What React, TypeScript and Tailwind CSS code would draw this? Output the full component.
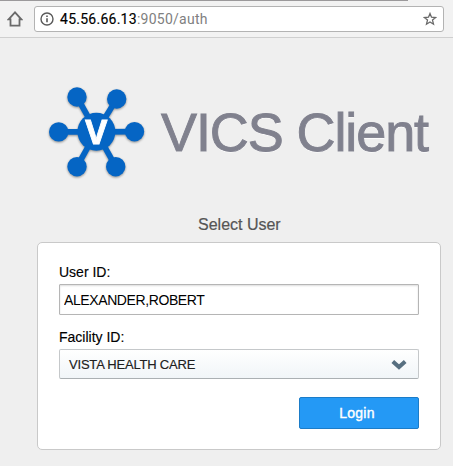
const nodes = [
  [77, 97],
  [116.7, 99],
  [58.7, 131.9],
  [134.5, 131.7],
  [77, 166.7],
  [115.7, 166.7],
];

function Logo() {
  return (
    <svg
      className="block h-[100px] w-[100px] shrink-0 drop-shadow-[0.5px_1px_1px_rgba(0,0,0,0.4)]"
      viewBox="46 82 100 100"
      fill="#0565c4"
    >
      {nodes.map(([x, y]) => (
        <g key={`${x}-${y}`}>
          <line x1="96.4" y1="131.8" x2={x} y2={y} stroke="#0565c4" strokeWidth="5.8" />
          <circle cx={x} cy={y} r="9.7" />
        </g>
      ))}
      <circle cx="96.4" cy="131.8" r="19" />
      <text
        x="96.2"
        y="144"
        textAnchor="middle"
        textLength="22"
        lengthAdjust="spacingAndGlyphs"
        strokeWidth="0.8"
        className="fill-white stroke-white font-['Open_Sans',sans-serif] text-[33.5px] font-bold"
      >
        V
      </text>
    </svg>
  );
}

function BrowserBar() {
  return (
    <div className="h-[38px] border-b border-[#cfcfcf] bg-[#f2f2f2]">
      <div className="h-px w-[408px] bg-[#9b999b]" />
      <div className="flex items-center pt-[5px]">
        <svg className="ml-[7px] h-4 w-4" viewBox="0 0 16 16" fill="none" stroke="#6a6a6a" strokeWidth="1.8">
          <path d="M8 1.3 1.6 8.3H3.5V14.6H12.5V8.3H14.4Z" />
        </svg>
        <div className="ml-[11px] flex h-[26px] w-[410px] items-center rounded-[3px] border border-[#b3b3b3] bg-white pl-[5px] pr-[6px]">
          <svg className="h-[14px] w-[14px]" viewBox="0 0 14 14" fill="none" stroke="#5a5a5a" strokeWidth="1.4">
            <circle cx="7" cy="7" r="6" />
            <path d="M7 6.2V10.3M7 3.5V5" strokeWidth="1.6" />
          </svg>
          <span className="ml-[6px] font-[Roboto,sans-serif] text-[14px] leading-6 tracking-[0.26px] text-[#808080]">
            <span className="text-black [-webkit-text-stroke:0.15px_black]">45.56.66.13</span>:9050/auth
          </span>
          <svg className="ml-auto h-[14px] w-[14px]" viewBox="0 0 14 14" fill="none" stroke="#696969" strokeWidth="1.3">
            <path d="M7 1.5 8.5 5.2 12.6 5.5 9.5 8.1 10.5 12.2 7 10 3.5 12.2 4.5 8.1 1.4 5.5 5.5 5.2Z" />
          </svg>
        </div>
      </div>
    </div>
  );
}

export default function App() {
  return (
    <div className="h-[466px] w-[453px] overflow-hidden bg-[#efefef] font-['Liberation_Sans',Arial,sans-serif]">
      <BrowserBar />
      <div className="flex pl-[46px] pt-[44px]">
        <Logo />
        <h1 className="ml-[15px] whitespace-nowrap text-[54px] leading-[100px] tracking-[-1.1px] text-[#80818e] [-webkit-text-stroke:0.9px_#80818e] [text-shadow:0_1px_0_#fff]">
          VICS Client
        </h1>
      </div>
      <h2 className="mt-[33px] pl-[198px] text-[16px] leading-5 text-[#555] [-webkit-text-stroke:0.2px_#555]">
        Select User
      </h2>
      <form
        className="ml-[37px] mt-[7px] h-[208px] w-[404px] rounded-[5px] border border-[#c9c9c9] bg-white px-[21px] pt-[20px] text-[14px] text-black"
        onSubmit={(e) => e.preventDefault()}
      >
        <label htmlFor="user" className="block h-[21px] leading-[18px] [-webkit-text-stroke:0.15px_black]">User ID:</label>
        <input
          id="user"
          defaultValue="ALEXANDER,ROBERT"
          className="block h-[31px] w-[360px] rounded-[1px] border border-[#b5b5b5] px-1 text-[14px] tracking-[-0.4px] shadow-[inset_0_1px_2px_#ddd] outline-none"
        />
        <div className="mt-[13px] h-[21px] leading-[18px] [-webkit-text-stroke:0.15px_black]">Facility ID:</div>
        <div className="flex h-[30px] w-[360px] items-center justify-between rounded-[2px] border border-[#c5c8ca] border-b-[#abb0b3] bg-linear-to-b from-white to-[#f1f5f8] pl-[9px] pr-[11px] text-[13px] tracking-[-0.2px] text-[#202020]">
          <span className="pt-px [-webkit-text-stroke:0.15px_#202020]">VISTA HEALTH CARE</span>
          <svg className="h-[11px] w-4" viewBox="0 0 16 11" fill="none" stroke="#576f80" strokeWidth="4">
            <path d="M1.8 2.4 8 8 14.2 2.4" />
          </svg>
        </div>
        <button className="ml-auto mt-[18px] block h-[32px] w-[120px] rounded-[2px] border border-[#1b7cc8] bg-[#2499f5] pr-1 text-[14px] tracking-[0.25px] text-white [-webkit-text-stroke:0.4px_white]">
          Login
        </button>
      </form>
    </div>
  );
}
